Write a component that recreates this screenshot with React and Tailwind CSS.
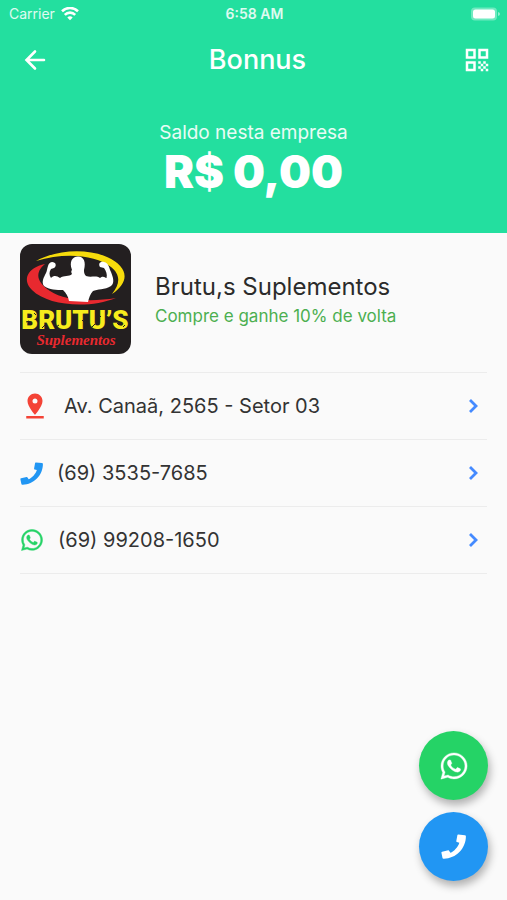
import React from 'react'
import { MdQrCode, MdPinDrop } from 'react-icons/md'
import { FaWhatsapp } from 'react-icons/fa'

function PhoneIcon({ size }) {
  return (
    <svg width={size} height={size} viewBox="0 0 24 24" fill="currentColor" aria-hidden="true">
      <path d="M16.6.5l6.3.6q1 .1 1 1.1C24 14 14 24 2.4 23.7q-.9 0-1-.9L.4 18q-.1-.8.7-1l5.8-1.3q.7-.1 1 .5l1.1 1.9C12.5 16.5 16.3 12.5 17.6 8.3l-2.3-.6q-.8-.2-.6-1L15.7 1.2q.1-.8.9-.7z" />
    </svg>
  )
}

function BackIcon() {
  return (
    <svg width="28" height="28" viewBox="0 0 28 28" fill="none" stroke="currentColor" strokeWidth="2.6" strokeLinecap="round" aria-hidden="true">
      <path d="M23 14H6M14 5.500L5.500 14l8.500 8.500" />
    </svg>
  )
}

function ChevronIcon() {
  return (
    <svg width="28" height="28" viewBox="0 0 28 28" fill="none" stroke="#448aff" strokeWidth="2.8" aria-hidden="true">
      <path d="M11 8l6 6-6 6" />
    </svg>
  )
}

const contacts = [
  { href: '#endereco', label: 'Av. Canaã, 2565 - Setor 03', icon: <MdPinDrop size={30} />, color: 'text-[#f44336]' },
  { href: 'tel:6935357685', label: '(69) 3535-7685', icon: <PhoneIcon size={23} />, color: 'text-[#2196f3]' },
  { href: '#whatsapp', label: '(69) 99208-1650', icon: <FaWhatsapp size={24} strokeWidth={10} />, color: 'text-[#25d366]' },
]

function StatusBar() {
  return (
    <div className="grid grid-cols-3 items-center h-7 pl-[9px] pr-[7px] text-sm text-white/85">
      <div className="flex items-center gap-[6px]">
        <span>Carrier</span>
        <svg width="18" height="14" viewBox="0 0 18 14" fill="none" stroke="white" strokeWidth="2.6" aria-hidden="true">
          <path d="M1 4.2a11.6 11.6 0 0 1 16 0" />
          <path d="M3.8 7.8a7.4 7.4 0 0 1 10.400 0" />
          <path d="M6.3 10.6 9 13.3l2.7-2.7a3.9 3.9 0 0 0-5.4 0z" fill="white" stroke="none" />
        </svg>
      </div>
      <span className="text-center font-semibold">6:58 AM</span>
      <svg className="justify-self-end" width="30" height="14" viewBox="0 0 30 14" aria-hidden="true">
        <rect x="1" y="0.5" width="26" height="13" rx="4" fill="white" fillOpacity="0.35" />
        <rect x="3" y="2.5" width="22" height="9" rx="2.5" fill="white" />
        <path d="M28 5v4q2-.5 2-2t-2-2z" fill="white" fillOpacity="0.5" />
      </svg>
    </div>
  )
}

function BrandLogo() {
  return (
    <svg className="shrink-0" width="111" height="110" viewBox="0 0 111 110" role="img" aria-label="Brutu's Suplementos">
      <rect width="111" height="110" rx="12" fill="#231f20" />
      <path d="M16 17C36 6 66 4 87 13c22 10 23 25 5 37 8-10 9-19-1-27C76 11 45 8 16 17z" fill="#f7dc0c" />
      <path d="M25 20C7 24 2 36 12 46c16 16 57 19 84 8-24 4-51 3-66-7C16 38 15 28 25 20z" fill="#e8292f" />
      <path
        d="M52 30C51 28 51 27 52 26C49 18 52 12.500 58 12.500C64 12.500 66 18 64 26C64 28 64 30 66 32C71 34 76 31 80 34C83 31 86 34 86.500 34C87.500 30 86 27 84 24L80 23C78 20 80 17 84 18C89 19 89 24 91 28C93 33 95 39 91 42C85 46 77 45 73 47C70 50 69 54 68 58L49 57C48 52 46 49 43 46C37 46 29 46 24 42C21 38 24 33 26 29C28 25 27 19 32 18C36 18 37 22 34 24L31 25C29 28 29 31 31 34C34 31 37 32 40 34C44 31 49 33 52 30Z"
        fill="white"
      />
      <text x="55" y="85" textAnchor="middle" fill="#f7ec1c" className="text-[26px] font-black font-['Roboto','Liberation_Sans',sans-serif]">BRUTU’S</text>
      {/* worn nicks in the lettering */}
      <path d="M6 78l3-1M14 69l2 2M22 84l3-3M36 83l3-2M43 72l2 2M53 82l2-2M62 76l2 2M72 83l3-3M79 71l2 2M97 79l2 2M103 83l2-2" stroke="#231f20" strokeWidth="1" />
      <text x="56" y="101" textAnchor="middle" fill="#e8292f" className="text-[15px] font-bold italic font-['Liberation_Serif',serif]">Suplementos</text>
    </svg>
  )
}

function ContactRow({ href, label, icon, color }) {
  return (
    <li className="border-b border-[#ececec]">
      <a href={href} className="flex items-center gap-[14px] h-[66px]">
        <span className={color}>{icon}</span>
        <span className="flex-1 text-xl text-[#333333]">{label}</span>
        <ChevronIcon />
      </a>
    </li>
  )
}

export default function App() {
  return (
    <div className="relative min-h-screen bg-[#fafafa] font-['Inter','Liberation_Sans',sans-serif]">
      <header className="bg-[#23df9f] text-white pb-9">
        <StatusBar />
        <div className="flex items-center h-16 pl-[21px] pr-[15px]">
          <button type="button" aria-label="Voltar"><BackIcon /></button>
          <h1 className="flex-1 pl-1 pt-px text-center text-[27px] font-medium">Bonnus</h1>
          <button type="button" aria-label="Código QR"><MdQrCode size={30} /></button>
        </div>
        <div className="flex flex-col items-center pt-7">
          <p className="text-[19px] leading-[26px] text-white/90">Saldo nesta empresa</p>
          <p className="text-[45px] leading-[51px] font-black">R$ 0,00</p>
        </div>
      </header>

      <main className="px-5 pt-[11px]">
        <section className="flex items-center gap-6 pb-[18px] border-b border-[#ececec]">
          <BrandLogo />
          <div className="pt-px">
            <h2 className="text-2xl leading-8 text-[#2b2b2b]">Brutu,s Suplementos</h2>
            <p className="text-[17px] leading-[26px] text-[#4caf50]">Compre e ganhe 10% de volta</p>
          </div>
        </section>
        <ul>
          {contacts.map((c) => <ContactRow key={c.href} {...c} />)}
        </ul>
      </main>

      {/* floating actions */}
      <div className="fixed right-[19px] bottom-[19px] flex flex-col gap-3">
        <button type="button" aria-label="WhatsApp" className="flex items-center justify-center size-[69px] rounded-full bg-[#25d366] text-white shadow-[2px_5px_9px_rgba(0,0,0,0.3)]">
          <FaWhatsapp size={30} strokeWidth={6} />
        </button>
        <button type="button" aria-label="Ligar" className="flex items-center justify-center size-[69px] rounded-full bg-[#2196f3] text-white shadow-[2px_5px_9px_rgba(0,0,0,0.3)]">
          <PhoneIcon size={25} />
        </button>
      </div>
    </div>
  )
}
